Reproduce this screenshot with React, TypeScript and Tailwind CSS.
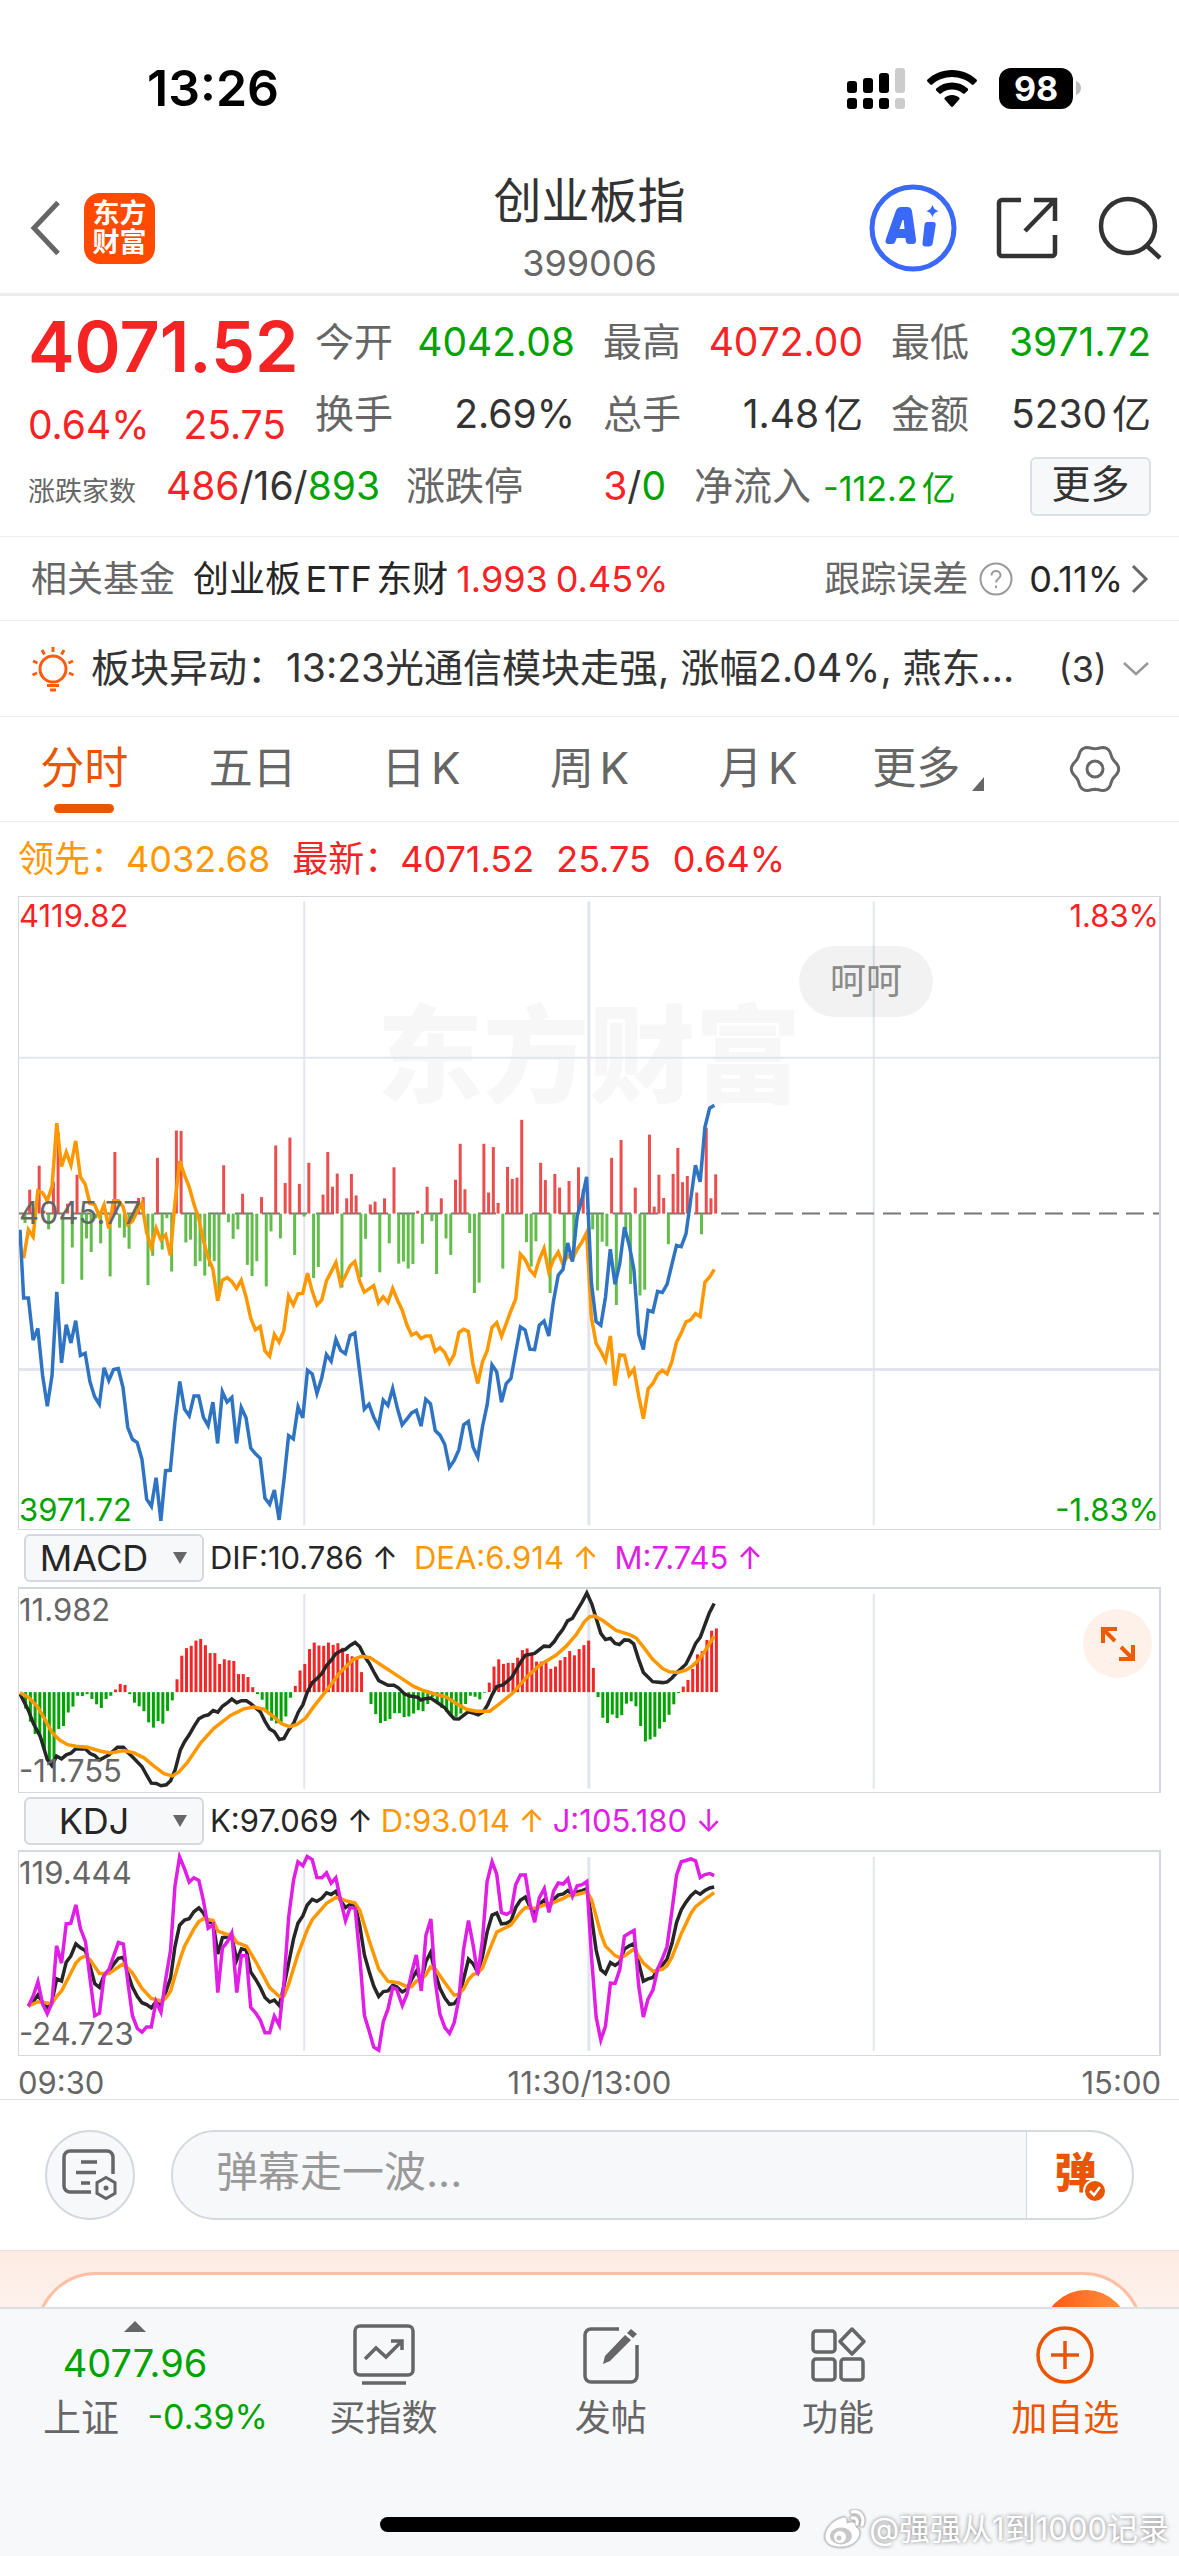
import type { ReactNode } from "react";

// ---------- chart data (chart units, one value per minute) ----------

const PRICE = [
    983, 983, 1085, 1057, 1170, 1245, 1170, 968, 1140, 1048, 1092, 1038, 1122, 1117, 1185, 1222, 1240, 1152, 1183, 1156,
    1154, 1200, 1296, 1325, 1333, 1373, 1470, 1487, 1418, 1522, 1401, 1400, 1280, 1185, 1252, 1268, 1220, 1220, 1272, 1292,
    1235, 1335, 1210, 1235, 1224, 1335, 1248, 1273, 1346, 1360, 1371, 1467, 1482, 1448, 1520, 1425, 1316, 1324, 1246, 1273,
    1158, 1167, 1214, 1177, 1120, 1136, 1083, 1110, 1118, 1074, 1068, 1160, 1252, 1240, 1272, 1294, 1230, 1243, 1202, 1250,
    1290, 1276, 1261, 1255, 1293, 1228, 1239, 1304, 1315, 1337, 1393, 1376, 1350, 1290, 1282, 1344, 1368, 1294, 1240, 1145,
    1162, 1235, 1190, 1178, 1115, 1053, 1061, 1107, 1108, 1049, 1039, 1075, 990, 928, 914, 850, 895, 785, 745, 690,
    945, 1040, 1049, 980, 865, 950, 900, 812, 855, 915, 1070, 1108, 1013, 1017, 967, 970, 950, 903, 856, 859,
    828, 745, 662, 702, 570, 524, 517,
];

const LEAD = [
    887, 818, 835, 724, 729, 748, 713, 560, 665, 630, 662, 603, 690, 708, 754, 757, 785, 758, 815, 748,
    748, 762, 806, 797, 774, 754, 825, 862, 814, 842, 830, 880, 750, 652, 686, 715, 756, 790, 845, 885,
    913, 990, 940, 934, 943, 960, 940, 980, 1032, 1060, 1052, 1111, 1124, 1071, 1090, 1062, 978, 1000, 973, 972,
    923, 967, 1000, 988, 942, 920, 897, 950, 930, 905, 895, 942, 969, 961, 953, 995, 980, 994, 960, 988,
    1012, 1048, 1073, 1067, 1081, 1075, 1075, 1112, 1103, 1115, 1140, 1120, 1067, 1059, 1064, 1145, 1190, 1137, 1110, 1054,
    1043, 1076, 1045, 1014, 986, 877, 890, 915, 928, 890, 863, 920, 890, 872, 902, 880, 890, 865, 848, 825,
    1030, 1093, 1112, 1135, 1075, 1195, 1121, 1122, 1170, 1155, 1220, 1275, 1203, 1190, 1168, 1158, 1167, 1138, 1090, 1068,
    1041, 1036, 1021, 1028, 945, 932, 914,
];

const MOMENTUM = [
    802, 721, 779, 663, 772, 817, 702, 581, 949, 755, 861, 685, 939, 839, 872, 790, 851, 770, 931, 630,
    813, 837, 864, 790, 741, 739, 952, 881, 644, 866, 790, 919, 578, 579, 849, 842, 906, 894, 929, 907,
    894, 980, 662, 800, 840, 817, 731, 903, 930, 894, 739, 955, 822, 614, 839, 705, 595, 879, 707, 786,
    656, 935, 908, 733, 630, 714, 682, 958, 742, 683, 735, 933, 840, 757, 750, 921, 742, 851, 667, 900,
    895, 912, 901, 772, 852, 714, 797, 925, 742, 839, 879, 697, 610, 720, 826, 971, 946, 610, 728, 618,
    753, 912, 666, 695, 692, 552, 848, 907, 846, 656, 698, 971, 683, 716, 895, 700, 880, 667, 720, 779,
    817, 965, 847, 858, 644, 1000, 601, 820, 949, 716, 977, 963, 588, 762, 685, 741, 853, 683, 620, 703,
    688, 779, 728, 829, 571, 742, 684,
];

const MACD = [
    535, 575, 612, 620, 660, 705, 690, 597, 588, 547, 529, 496, 497, 491, 506, 522, 533, 506, 496, 477,
    460, 463, 491, 517, 528, 543, 577, 593, 573, 581, 542, 510, 446, 374, 351, 344, 328, 323, 342, 366,
    366, 399, 385, 388, 390, 430, 430, 439, 470, 491, 508, 545, 572, 580, 582, 559, 502, 466, 419, 399,
    354, 334, 343, 344, 334, 341, 336, 350, 369, 376, 384, 424, 485, 521, 552, 579, 573, 567, 549, 549,
    561, 559, 550, 540, 543, 521, 500, 520, 533, 545, 558, 560, 550, 521, 496, 499, 507, 487, 456, 407,
    385, 399, 396, 396, 380, 357, 352, 370, 392, 392, 396, 414, 407, 388, 378, 360, 373, 354, 342, 328,
    411, 500, 563, 579, 553, 564, 555, 520, 513, 528, 588, 635, 629, 621, 596, 576, 554, 522, 488, 468,
    448, 414, 370, 360, 326, 298, 291,
];

const DIF =
    "57,490 82,540 97,580 118,620 139,690 153,709 167,680 182,688 196,676 210,671 225,657 254,658 268,672 282,678 296,692 310,684 325,676 350,653 368,653 381,668 395,682 424,712 438,738 452,762 467,763 481,770 497,767 510,755 524,720 539,662 552,636 566,615 580,590 595,566 609,558 624,554 638,541 652,546 666,528 680,518 694,506 709,517 723,511 738,511 751,520 780,545 794,574 808,597 822,606 837,629 851,626 865,600 880,580 894,546 908,523 921,485 936,456 950,444 965,428 979,404 993,388 1007,368 1022,359 1036,355 1050,343 1065,334 1079,347 1093,376 1107,396 1121,423 1136,450 1164,464 1182,464 1195,472 1213,490 1230,497 1254,501 1263,509 1275,505 1292,503 1310,515 1335,533 1350,552 1363,566 1377,567 1392,555 1405,545 1420,549 1435,554 1449,546 1463,525 1477,493 1491,468 1510,463 1536,440 1555,407 1565,390 1577,373 1605,367 1633,345 1650,346 1664,331 1676,312 1690,294 1704,268 1719,260 1733,235 1748,210 1762,183 1777,217 1790,260 1804,306 1818,325 1833,321 1847,337 1860,340 1875,326 1889,327 1903,338 1917,383 1932,425 1960,453 1990,456 2004,454 2018,442 2032,426 2046,413 2060,400 2075,370 2089,337 2103,318 2130,245 2145,215";
const DEA =
    "57,487 82,500 110,530 130,565 153,607 175,630 200,645 225,650 260,653 300,665 330,670 370,663 400,670 430,685 460,710 490,733 515,740 535,728 560,700 600,640 640,595 690,556 730,536 760,530 790,537 820,560 845,582 868,590 890,583 915,565 940,530 985,472 1020,425 1060,385 1085,376 1110,380 1150,407 1200,440 1240,467 1270,480 1310,492 1340,500 1370,520 1400,537 1430,543 1470,543 1500,520 1540,487 1580,440 1620,403 1670,372 1700,345 1730,310 1755,270 1770,256 1785,253 1810,267 1850,297 1890,310 1910,320 1930,345 1960,385 1990,413 2010,423 2035,425 2060,418 2080,405 2100,385 2120,355 2145,315";

const KDJ_J =
    "82,622 97,590 111,547 125,615 139,645 153,612 167,437 182,490 196,370 210,368 225,312 239,385 254,424 268,540 282,651 296,643 310,527 325,508 339,467 353,427 368,432 381,545 395,650 410,690 424,701 438,685 452,685 466,608 481,640 495,540 510,450 523,255 537,165 552,202 566,242 580,229 595,237 609,300 623,383 638,372 652,580 666,443 680,426 694,398 709,580 723,467 738,468 751,625 766,643 780,665 794,703 808,703 822,652 837,680 851,550 865,350 880,235 893,180 908,192 921,164 936,173 950,228 965,229 979,214 993,245 1007,229 1022,300 1036,360 1050,320 1065,322 1079,470 1093,650 1107,697 1121,747 1136,756 1150,668 1164,630 1178,565 1190,570 1207,620 1221,585 1235,520 1249,465 1264,575 1278,405 1293,355 1306,545 1320,645 1335,687 1349,705 1363,672 1377,600 1391,450 1406,360 1420,435 1434,525 1448,420 1462,240 1477,180 1491,218 1505,335 1520,341 1534,333 1548,250 1562,220 1577,220 1591,310 1605,365 1619,290 1634,262 1648,335 1662,270 1676,245 1691,248 1705,232 1719,285 1733,253 1748,250 1762,240 1776,470 1790,655 1804,725 1818,683 1833,551 1847,552 1861,510 1875,408 1890,398 1904,390 1918,560 1932,655 1946,600 1961,572 1975,508 1990,474 2003,440 2018,330 2032,220 2046,180 2060,176 2075,171 2089,177 2103,228 2117,219 2132,216 2145,222";
const KDJ_K =
    "82,622 97,608 111,587 125,610 139,628 153,610 167,538 182,545 196,487 210,468 225,431 239,443 254,452 268,500 282,553 296,564 310,527 325,513 339,493 353,475 368,472 381,520 395,563 410,592 424,611 438,617 452,627 466,608 481,620 495,580 510,535 523,440 537,374 552,358 566,354 580,333 595,321 609,337 623,365 638,366 652,462 666,412 680,410 694,410 709,480 723,446 738,450 751,517 766,540 780,565 794,595 808,609 822,603 837,620 851,560 865,490 880,415 893,368 908,345 921,312 936,295 950,301 965,291 979,275 993,280 1007,270 1022,300 1036,320 1050,310 1065,312 1079,375 1093,465 1107,515 1121,560 1136,592 1150,577 1164,575 1178,558 1190,562 1207,578 1221,570 1235,540 1249,515 1264,545 1278,485 1292,457 1306,520 1320,567 1335,597 1349,616 1363,614 1377,595 1391,540 1406,478 1420,492 1434,518 1448,470 1462,395 1477,343 1491,337 1505,370 1520,368 1534,360 1548,320 1562,298 1577,288 1591,318 1605,340 1619,310 1634,297 1648,322 1662,295 1676,282 1691,278 1705,268 1719,280 1733,272 1748,268 1762,262 1776,350 1790,450 1804,510 1818,522 1833,488 1847,497 1861,487 1875,447 1890,437 1904,430 1918,490 1932,545 1946,538 1961,534 1975,508 1990,495 2003,478 2018,430 2032,365 2046,327 2060,304 2075,284 2089,271 2103,279 2117,268 2132,260 2145,257";
const KDJ_D =
    "82,622 111,608 153,614 167,592 182,575 210,520 225,490 239,475 254,468 268,480 296,522 325,522 353,502 368,492 395,520 424,567 452,598 481,606 495,598 510,575 523,530 537,482 552,438 580,385 595,363 609,354 638,360 652,392 680,402 694,402 709,427 738,438 766,485 808,565 837,592 851,590 865,555 893,463 921,388 936,357 979,307 1007,289 1022,292 1036,299 1065,306 1079,328 1107,420 1136,508 1164,546 1195,550 1221,562 1235,562 1249,545 1264,540 1278,525 1292,502 1306,508 1335,550 1363,588 1377,585 1391,570 1406,540 1420,525 1434,520 1448,505 1462,468 1491,395 1505,388 1534,373 1562,335 1577,320 1605,323 1634,312 1662,305 1691,292 1705,284 1733,280 1762,272 1776,295 1804,400 1818,438 1847,467 1861,473 1875,468 1904,447 1932,490 1961,515 1990,508 2003,498 2018,472 2046,400 2075,338 2089,317 2117,295 2145,274";

const minuteLine = (values: number[]) => values.map((y, i) => `${68 + 14.23 * i},${y}`).join(" ");

const GRID_X = [912, 1768, 2625];

// ---------- chart pieces ----------

function Line({ points, color }: { points: string; color: string }) {
    return (
        <polyline
            points={points}
            fill="none"
            stroke={color}
            strokeWidth="3.500"
            strokeLinejoin="miter"
            vectorEffect="non-scaling-stroke"
        />
    );
}

interface BarsProps {
    values: number[];
    base: number;
    start: number;
    up: string;
    down: string;
}

function Bars({ values, base, start, up, down }: BarsProps) {
    return (
        <>
            {values.map((y, i) => (
                <rect
                    key={i}
                    x={start + 14.23 * i - 4.5}
                    width={9}
                    y={Math.min(y, base)}
                    height={Math.abs(y - base)}
                    fill={y < base ? up : down}
                />
            ))}
        </>
    );
}

function GridLines({ top, bottom }: { top: number; bottom: number }) {
    return (
        <>
            {GRID_X.map((x) => (
                <line
                    key={x}
                    x1={x}
                    x2={x}
                    y1={top}
                    y2={bottom}
                    stroke="#e2e5ed"
                    strokeWidth={x === 1768 ? 3 : 2}
                    vectorEffect="non-scaling-stroke"
                />
            ))}
        </>
    );
}

function MainChart() {
    return (
        <div className="relative mx-[18px] h-[634px] border border-r-2 border-[#d5d8de]">
            <div className="absolute inset-x-0 top-[84px] text-center text-[106px] leading-[150px] font-black text-[#f7f7f7]">
                东方财富
            </div>
            <svg viewBox="54 13 3429 1529" preserveAspectRatio="none" className="absolute inset-0 h-full w-full">
                <GridLines top={24} bottom={1533} />
                <line x1="54" x2="3483" y1="402" y2="402" stroke="#e2e5ed" strokeWidth="2" vectorEffect="non-scaling-stroke" />
                <line x1="54" x2="3483" y1="1156" y2="1156" stroke="#e2e5ed" strokeWidth="3" vectorEffect="non-scaling-stroke" />
                <line
                    x1="54"
                    x2="3483"
                    y1="779"
                    y2="779"
                    stroke="#777777"
                    strokeWidth="2"
                    strokeDasharray="18 9"
                    vectorEffect="non-scaling-stroke"
                />
                <Bars values={MOMENTUM} base={779} start={72} up="#ec4d4d" down="#62bd4b" />
                <Line points={minuteLine(LEAD)} color="#ff9800" />
                <Line points={`57,818 ${minuteLine(PRICE)}`} color="#2f74c2" />
            </svg>
            <div className="absolute inset-0 flex flex-col justify-between text-[31px] leading-[38px]">
                <div className="flex justify-between text-[#f52323]">
                    <span>4119.82</span>
                    <span>1.83%</span>
                </div>
                <div className="text-[#666666]">4045.77</div>
                <div className="flex justify-between text-[#00a300]">
                    <span>3971.72</span>
                    <span>-1.83%</span>
                </div>
            </div>
            <div className="absolute top-[49px] right-[226px] rounded-full bg-black/5 px-[31px] text-[36px] leading-[71px] text-[#8a8a8a]">
                呵呵
            </div>
        </div>
    );
}

interface SubChartProps {
    viewBox: string;
    high: string;
    low: string;
    children: ReactNode;
}

function SubChart({ viewBox, high, low, children }: SubChartProps) {
    return (
        <div className="relative mx-[18px] h-[206px] border-t-2 border-r-2 border-b border-l border-[#d5d8de]">
            <svg viewBox={viewBox} preserveAspectRatio="none" className="absolute inset-0 h-full w-full">
                {children}
            </svg>
            <div className="absolute inset-0 flex flex-col justify-between text-[31px] leading-[42px] text-[#666666]">
                <span>{high}</span>
                <span>{low}</span>
            </div>
        </div>
    );
}

interface Reading {
    text: string;
    color: string;
    gap?: string;
}

function IndicatorBar({ name, readings }: { name: string; readings: Reading[] }) {
    return (
        <div className="flex h-[57px] items-center pl-6 text-[31px]">
            <div className="relative mr-[6px]">
                <select
                    aria-label={`指标 ${name}`}
                    defaultValue={name}
                    className="h-12 w-[180px] appearance-none rounded-md border-2 border-[#d5d8de] bg-[#f7f8fa] pr-10 text-center text-[36px] leading-10 text-[#262626] [text-align-last:center]"
                >
                    <option>MACD</option>
                    <option>KDJ</option>
                </select>
                <svg viewBox="0 0 14 12" className="pointer-events-none absolute top-[18px] right-[17px] h-3 w-3.5">
                    <path d="M0 0h14L7 12z" fill="#666666" />
                </svg>
            </div>
            {readings.map((r) => (
                <span key={r.text} className={`whitespace-pre ${r.color} ${r.gap ?? ""}`}>
                    {r.text}
                </span>
            ))}
        </div>
    );
}

// ---------- icons ----------

const GEAR = Array.from({ length: 73 }, (_, i) => {
    const a = (i * Math.PI) / 36;
    const r = 22 + 1.7 * Math.cos(6 * a);
    return `${26 + r * Math.cos(a)},${25 + r * Math.sin(a)}`;
}).join(" ");

function StatusIcons() {
    return (
        <div className="flex items-center">
            <svg viewBox="0 0 60 41" className="h-[41px] w-[60px]">
                <g fill="#000">
                    <rect x="0" y="13" width="10" height="12" rx="3" />
                    <rect x="16" y="10" width="10" height="15" rx="3" />
                    <rect x="32" y="5" width="10" height="20" rx="3" />
                    <rect x="0" y="30" width="10" height="11" rx="3" />
                    <rect x="16" y="30" width="10" height="11" rx="3" />
                    <rect x="32" y="30" width="10" height="11" rx="3" />
                </g>
                <g fill="#cccccc">
                    <rect x="48" y="0" width="10" height="25" rx="3" />
                    <rect x="48" y="30" width="10" height="11" rx="3" />
                </g>
            </svg>
            <svg viewBox="0 0 50 37" className="ml-5 h-[37px] w-[50px]">
                <path d="M25 0C15.500 0 6.800 3.700 .5 9.600c-.6.600-.6 1.400-.1 2l2.900 2.900c.5.500 1.400.5 2 0C10.500 9.800 17.400 7 25 7s14.500 2.800 19.700 7.500c.6.500 1.500.5 2 0l2.900-2.900c.5-.6.500-1.400-.1-2C43.200 3.700 34.500 0 25 0z" />
                <path d="M25 12.500c-6 0-11.500 2.200-15.700 5.900-.6.600-.6 1.500-.1 2l3 3c.5.500 1.300.5 1.900.1 2.900-2.500 6.700-4 10.900-4s8 1.500 10.900 4c.6.400 1.400.4 1.900-.1l3-3c.5-.5.500-1.400-.1-2-4.200-3.700-9.700-5.900-15.700-5.900z" />
                <path d="M25 25c-2.700 0-5.200 1-7.100 2.600-.6.500-.6 1.400-.1 2l6.200 6.900c.5.600 1.500.6 2 0l6.200-6.900c.5-.6.500-1.500-.1-2C30.200 26 27.700 25 25 25z" />
            </svg>
            <div className="ml-[22px] flex h-[41px] w-[74px] items-center justify-center rounded-xl bg-black text-[34px] font-bold text-white">
                98
            </div>
            <svg viewBox="0 0 5 14" className="ml-[3px] h-[14px] w-[5px]">
                <path d="M0 0c3 1 5 3.500 5 7s-2 6-5 7z" fill="#bdbdbd" />
            </svg>
        </div>
    );
}

function Header() {
    return (
        <header className="grid h-[154px] grid-cols-[1fr_auto_1fr] items-center border-b-[3px] border-[#ededed] pt-6">
            <div className="flex items-center pb-[3px] pl-[30px]">
                <button aria-label="返回">
                    <svg viewBox="0 0 30 54" className="h-[54px] w-[30px]">
                        <path d="M28 1.500L4 27l24 25.500" fill="none" stroke="#666666" strokeWidth="5" />
                    </svg>
                </button>
                <a
                    href="#home"
                    className="ml-6 flex h-[71px] w-[71px] flex-col items-center justify-center rounded-2xl bg-[#ff4a00] text-[27px] leading-[29px] font-bold text-white"
                >
                    <span>东方</span>
                    <span>财富</span>
                </a>
            </div>
            <div className="text-center">
                <h1 className="text-[48px] leading-[66px] text-[#333333]">创业板指</h1>
                <div className="text-[36px] leading-[58px] text-[#666666]">399006</div>
            </div>
            <div className="flex items-center justify-end pr-4 pb-[3px]">
                <button aria-label="Ai">
                    <svg viewBox="0 0 88 88" className="h-[88px] w-[88px]" fill="#3a69fa">
                        <circle cx="44" cy="44" r="41" fill="none" stroke="#3a69fa" strokeWidth="5" />
                        <path
                            fillRule="evenodd"
                            d="M19.500 60c-2.500 0-3.600-2-2.800-4.300l9.800-28c1-3 2.700-4.700 6-4.700h5.500c3 0 4.600 1.400 5 4.300L47 55.500c.4 2.700-.7 4.500-3.200 4.500h-3.500c-2.200 0-3.200-1-3.500-3l-.4-3h-8.700l-1.200 3.300c-.7 1.900-1.700 2.700-3.500 2.700zM30.500 45h5l-.8-9h-1.200z"
                        />
                        <path d="M58 38h6c2 0 3 1.200 2.700 3l-2.900 18c-.4 2.300-1.500 3.500-4 3.500h-3.300c-2.300 0-3.300-1.300-3-3.500l2-18c.2-2 1-3 2.500-3z" />
                        <path d="M63.500 20.500c1 4 2.700 5.600 6.500 6.500-3.800 1-5.500 2.500-6.500 6.500-1-4-2.700-5.500-6.500-6.500 3.800-.9 5.500-2.500 6.500-6.500z" />
                    </svg>
                </button>
                <button aria-label="分享" className="ml-[39px]">
                    <svg viewBox="0 0 62 62" className="h-[62px] w-[62px]" fill="none" stroke="#333333" strokeWidth="4.500">
                        <path d="M25 3H6a3 3 0 0 0-3 3v50a3 3 0 0 0 3 3h50a3 3 0 0 0 3-3V38" />
                        <path d="M38 3h21v21M59 3L29 34" />
                    </svg>
                </button>
                <button aria-label="搜索" className="ml-[39px]">
                    <svg viewBox="0 0 66 64" className="h-16 w-[66px]" fill="none" stroke="#333333" strokeWidth="4.500">
                        <circle cx="31" cy="30" r="27" />
                        <path d="M50 50l13 12" />
                    </svg>
                </button>
            </div>
        </header>
    );
}

// ---------- quote block ----------

interface StatProps {
    label: string;
    value: string;
    color?: string;
}

function Stat({ label, value, color = "text-[#333333]" }: StatProps) {
    return (
        <div className="flex h-[72px] items-center justify-between">
            <span className="text-[#666666]">{label}</span>
            <span className={color}>{value}</span>
        </div>
    );
}

function Quote() {
    return (
        <section className="border-b border-[#ededed] px-7 pt-[10px] pb-[14px] text-[39px]">
            <div className="flex">
                <div className="flex w-[287px] flex-col justify-between text-[#f52323]">
                    <div className="text-[70px] leading-[82px] font-semibold">4071.52</div>
                    <div className="flex justify-between pr-[29px] leading-[50px]">
                        <span>0.64%</span>
                        <span>25.75</span>
                    </div>
                </div>
                <div className="grid flex-1 grid-cols-3 gap-x-7">
                    <Stat label="今开" value="4042.08" color="text-[#00a300]" />
                    <Stat label="最高" value="4072.00" color="text-[#f52323]" />
                    <Stat label="最低" value="3971.72" color="text-[#00a300]" />
                    <Stat label="换手" value="2.69%" />
                    <Stat label="总手" value="1.48亿" />
                    <Stat label="金额" value="5230亿" />
                </div>
            </div>
            <div className="flex h-[72px] items-center text-[#333333]">
                <div className="flex w-[378px] items-center">
                    <span className="w-[138px] pt-3 text-[27px] text-[#666666]">涨跌家数</span>
                    <span>
                        <span className="text-[#f52323]">486</span>/16/<span className="text-[#00a300]">893</span>
                    </span>
                </div>
                <div className="flex w-[260px] justify-between">
                    <span className="text-[#666666]">涨跌停</span>
                    <span>
                        <span className="text-[#f52323]">3</span>/<span className="text-[#00a300]">0</span>
                    </span>
                </div>
                <span className="ml-7 text-[#666666]">净流入</span>
                <span className="ml-3 pt-1 text-[34px] text-[#00a300]">-112.2亿</span>
                <button className="ml-auto h-[59px] w-[121px] rounded-md border-2 border-[#dcdfe4] bg-[#f7f8fa] pb-1 leading-[50px]">
                    更多
                </button>
            </div>
        </section>
    );
}

function RelatedFund() {
    return (
        <section className="flex h-[84px] items-center border-b border-[#ededed] pr-[30px] pl-[31px] text-[36px] text-[#262626]">
            <span className="text-[#666666]">相关基金</span>
            <a href="#fund" className="ml-[18px] flex">
                <span>创业板ETF东财</span>
                <span className="ml-2 text-[#f52323]">1.993</span>
                <span className="ml-2 text-[#f52323]">0.45%</span>
            </a>
            <span className="ml-auto text-[#666666]">跟踪误差</span>
            <svg viewBox="0 0 34 34" className="mr-4 ml-[11px] h-[34px] w-[34px]" fill="none" stroke="#999999" strokeWidth="2">
                <circle cx="17" cy="17" r="15.500" />
                <path d="M12.500 13.500c0-2.800 2-4.500 4.500-4.500s4.500 1.600 4.500 4.200c0 3.600-4.500 3.600-4.500 7.300M17 23.500v2.500" />
            </svg>
            <span>0.11%</span>
            <svg viewBox="0 0 18 30" className="ml-2 h-[30px] w-[18px]" fill="none" stroke="#666666" strokeWidth="3">
                <path d="M2 2l13 13L2 28" />
            </svg>
        </section>
    );
}

function SectorNews() {
    return (
        <section className="flex h-24 items-center border-b border-[#ededed] pr-[30px] pl-[31px] text-[39px] text-[#333333] [text-autospace:no-autospace]">
            <svg viewBox="0 0 44 46" className="mr-4 h-[46px] w-11 shrink-0" fill="none" stroke="#ff5a0d" strokeWidth="3">
                <circle cx="22" cy="23" r="13" />
                <path d="M16 39.500h12M19 44h6M22 1v5M11 4l2.500 4.500M33 4l-2.500 4.500M2 15l4.500 2M42 15l-4.500 2M1.500 29l4.500-2M42.500 29L38 27" />
            </svg>
            <span className="truncate">板块异动：13:23光通信模块走强, 涨幅2.04%, 燕东...</span>
            <span className="ml-auto shrink-0 text-[36px]">(3)</span>
            <svg viewBox="0 0 26 14" className="ml-4 h-[14px] w-[26px] shrink-0" fill="none" stroke="#999999" strokeWidth="2.500">
                <path d="M1 1l12 11L25 1" />
            </svg>
        </section>
    );
}

const TABS = ["分时", "五日", "日K", "周K", "月K"];

function Tabs() {
    return (
        <nav className="grid h-[105px] grid-cols-7 border-b border-[#ededed] text-[44px] text-[#666666]">
            {TABS.map((tab, i) => (
                <button
                    key={tab}
                    className={`flex flex-col items-center justify-end gap-1 pb-2 ${i === 0 ? "text-[#ea5504]" : ""}`}
                >
                    <span className="leading-[64px]">{tab}</span>
                    <span className={`h-[9px] w-[60px] rounded-full ${i === 0 ? "bg-[#ea5504]" : ""}`} />
                </button>
            ))}
            <button className="flex items-center justify-center gap-3 pb-[3px] pl-1">
                更多
                <svg viewBox="0 0 12 14" className="mt-8 h-[14px] w-3">
                    <path d="M12 0v14H0z" fill="#666666" />
                </svg>
            </button>
            <button aria-label="设置" className="flex items-center justify-center">
                <svg viewBox="0 0 52 50" className="h-[50px] w-[52px]" fill="none" stroke="#666666" strokeWidth="3">
                    <polygon points={GEAR} />
                    <circle cx="26" cy="25" r="8" />
                </svg>
            </button>
        </nav>
    );
}

// ---------- bottom ----------

function DanmuBar() {
    return (
        <section className="flex items-center gap-9 border-t border-b border-[#dcdfe4] px-[45px] py-[30px]">
            <button
                aria-label="弹幕设置"
                className="flex h-[90px] w-[90px] shrink-0 items-center justify-center rounded-full border-2 border-[#d5d8de] bg-[#f7f8fa]"
            >
                <svg viewBox="0 0 56 52" className="h-[52px] w-14" fill="none" stroke="#666666" strokeWidth="3.500">
                    <path d="M29 43H8a6 6 0 0 1-6-6V8a6 6 0 0 1 6-6h37a6 6 0 0 1 6 6v17" />
                    <path d="M19 13h16M14 23.500h20M19 34h9" />
                    <path d="M44 28.500l9 5.200v10.600l-9 5.200-9-5.200V33.700z" strokeWidth="3" />
                    <circle cx="44" cy="39" r="2.500" fill="#666666" stroke="none" />
                </svg>
            </button>
            <form className="flex h-[90px] flex-1 overflow-hidden rounded-full border-2 border-[#d5d8de]">
                <input
                    aria-label="弹幕"
                    placeholder="弹幕走一波..."
                    className="min-w-0 flex-1 bg-[#f7f8fa] pb-2 pl-[43px] text-[42px] text-[#333333] outline-none placeholder:text-[#999999]"
                />
                <button
                    type="button"
                    aria-label="弹幕开关"
                    className="relative w-[106px] border-l border-[#d5d8de] pr-2 pb-1 text-[42px] leading-[80px] font-black text-[#ea5504]"
                >
                    弹
                    <svg viewBox="0 0 24 24" className="absolute top-[47px] left-[56px] h-6 w-6">
                        <circle cx="12" cy="12" r="11" fill="#ea5504" stroke="#ffffff" strokeWidth="2" />
                        <path d="M7 12l4 4 6-8" fill="none" stroke="#ffffff" strokeWidth="2.500" />
                    </svg>
                </button>
            </form>
        </section>
    );
}

function PromoCard() {
    return (
        <section className="h-[56px] overflow-hidden bg-gradient-to-b from-[#fdebe3] to-[#fef1ec] px-9 pt-[21px]">
            <div className="flex h-[140px] justify-end rounded-[60px] border-[3px] border-[#ffbfa3] bg-white pt-[15px] pr-[11px]">
                <div className="h-[86px] w-[86px] rounded-full bg-gradient-to-r from-[#ff5208] to-[#ff9440]" />
            </div>
        </section>
    );
}

interface NavItemProps {
    label: string;
    active?: boolean;
    children: ReactNode;
}

function NavItem({ label, active, children }: NavItemProps) {
    return (
        <button className={`flex flex-1 flex-col items-center pt-[14px] text-[36px] ${active ? "text-[#ea5504]" : "text-[#666666]"}`}>
            <svg viewBox="0 0 64 64" className="h-16 w-16" fill="none" stroke="currentColor" strokeWidth="3.500">
                {children}
            </svg>
            <span className="mt-1 leading-[54px]">{label}</span>
        </button>
    );
}

function BottomNav() {
    return (
        <footer className="border-t-2 border-[#dcdfe4] bg-[#f7f8fa]">
            <div className="flex h-[208px]">
                <button className="flex w-[270px] shrink-0 flex-col items-center pt-3 text-[38px]">
                    <svg viewBox="0 0 22 11" className="h-[11px] w-[22px]">
                        <path d="M11 0l11 11H0z" fill="#666666" />
                    </svg>
                    <span className="mt-1 leading-[54px] text-[#00a300]">4077.96</span>
                    <span className="flex w-full items-center justify-between pr-[2px] pl-[43px] leading-[54px] whitespace-nowrap">
                        <span className="text-[38px] text-[#666666]">上证</span>
                        <span className="text-[34px] text-[#00a300]">-0.39%</span>
                    </span>
                </button>
                <NavItem label="买指数">
                    <rect x="3" y="3" width="58" height="49" rx="5" />
                    <path d="M10 60h44M13 36l11-11 10 9 15-15M39 18h11v9" />
                </NavItem>
                <NavItem label="发帖">
                    <path d="M40 6H12a6 6 0 0 0-6 6v41a6 6 0 0 0 6 6h40a6 6 0 0 0 6-6V22" />
                    <path d="M24 41l2-8 20-21 6 5-21 21zM48 10l4-4 6 5-4 4z" fill="currentColor" stroke="none" />
                </NavItem>
                <NavItem label="功能">
                    <rect x="7" y="8" width="22" height="21" rx="3" />
                    <rect x="7" y="36" width="22" height="21" rx="3" />
                    <rect x="35" y="36" width="22" height="21" rx="3" />
                    <path d="M46 6l12 12.500L46 31 34 18.500z" strokeLinejoin="round" />
                </NavItem>
                <NavItem label="加自选" active>
                    <circle cx="32" cy="32" r="27" />
                    <path d="M32 18v28M18 32h28" />
                </NavItem>
            </div>
            <div className="relative h-10">
                <div className="mx-auto h-[15px] w-[420px] rounded-full bg-black" />
                <div className="absolute right-2.5 bottom-2 flex items-center text-[31px] leading-10 text-white [text-autospace:no-autospace] [text-shadow:0_0_4px_#777777]">
                    <svg viewBox="0 0 42 38" className="mr-[3px] h-[38px] w-[42px] drop-shadow-[0_0_1px_#888888]">
                        <path
                            d="M17 8c3-2 7-1 6 5 5-2 10-1 9 4 8 3 3 19-13 20C6 38 0 32 1 25 2 18 9 10 17 8z"
                            fill="#ffffff"
                            stroke="#c4c4c4"
                        />
                        <ellipse cx="17" cy="26" rx="11" ry="8.500" fill="#c8c8c8" />
                        <circle cx="16" cy="27" r="6" fill="#ffffff" />
                        <circle cx="15" cy="28" r="2.500" fill="#c8c8c8" />
                        <path d="M28 2c8-2 13 5 10 13M28 8c4-1 6 2 5 6" fill="none" stroke="#c4c4c4" strokeWidth="4.500" strokeLinecap="round" />
                        <path d="M28 2c8-2 13 5 10 13M28 8c4-1 6 2 5 6" fill="none" stroke="#ffffff" strokeWidth="3" strokeLinecap="round" />
                    </svg>
                    @强强从1到1000记录
                </div>
            </div>
        </footer>
    );
}

export default function App() {
    return (
        <main className="w-full overflow-hidden bg-white font-['Inter','Noto_Sans_CJK_SC',sans-serif] [text-autospace:normal]">
            <div className="flex h-[142px] items-center justify-between pt-[34px] pr-[98px] pl-[147px]">
                <span className="text-[50px] font-semibold">13:26</span>
                <StatusIcons />
            </div>
            <Header />
            <Quote />
            <RelatedFund />
            <SectorNews />
            <Tabs />

            <div className="flex h-[74px] items-center pl-[18px] text-[36px] text-[#f52323]">
                <span className="text-[#ff9800]">领先：4032.68</span>
                <span className="ml-[22px]">最新：4071.52</span>
                <span className="ml-[22px]">25.75</span>
                <span className="ml-[22px]">0.64%</span>
            </div>
            <MainChart />

            <IndicatorBar
                name="MACD"
                readings={[
                    { text: "DIF:10.786 ↑", color: "text-[#262626]" },
                    { text: "DEA:6.914 ↑", color: "text-[#ff9800]", gap: "ml-4" },
                    { text: "M:7.745 ↑", color: "text-[#e01ee6]", gap: "ml-4" },
                ]}
            />
            <div className="relative">
                <SubChart viewBox="54 171 3429 618" high="11.982" low="-11.755">
                    <GridLines top={186} bottom={779} />
                    <Bars values={MACD} base={485} start={74} up="#f52525" down="#00a300" />
                    <Line points={DIF} color="#262626" />
                    <Line points={DEA} color="#ff9800" />
                </SubChart>
                <button
                    aria-label="全屏"
                    className="absolute top-[22px] right-[27px] flex h-[69px] w-[69px] items-center justify-center rounded-full bg-[#fef1ea]"
                >
                    <svg viewBox="0 0 34 34" className="h-[34px] w-[34px]" fill="none" stroke="#f05a00" strokeWidth="4">
                        <path d="M2 16V2h14M2 2l12 12M32 18v14H18M32 32L20 20" />
                    </svg>
                </button>
            </div>

            <IndicatorBar
                name="KDJ"
                readings={[
                    { text: "K:97.069 ↑", color: "text-[#262626]" },
                    { text: "D:93.014 ↑", color: "text-[#ff9800]", gap: "ml-2" },
                    { text: "J:105.180 ↓", color: "text-[#e01ee6]", gap: "ml-2" },
                ]}
            />
            <SubChart viewBox="54 150 3429 621" high="119.444" low="-24.723">
                <GridLines top={165} bottom={759} />
                <Line points={KDJ_K} color="#262626" />
                <Line points={KDJ_D} color="#ff9800" />
                <Line points={KDJ_J} color="#e01ee6" />
            </SubChart>
            <div className="mx-[18px] grid h-[43px] grid-cols-3 items-center pt-1 text-[31px] text-[#666666]">
                <span>09:30</span>
                <span className="text-center">11:30/13:00</span>
                <span className="text-right">15:00</span>
            </div>

            <DanmuBar />
            <PromoCard />
            <BottomNav />
        </main>
    );
}
